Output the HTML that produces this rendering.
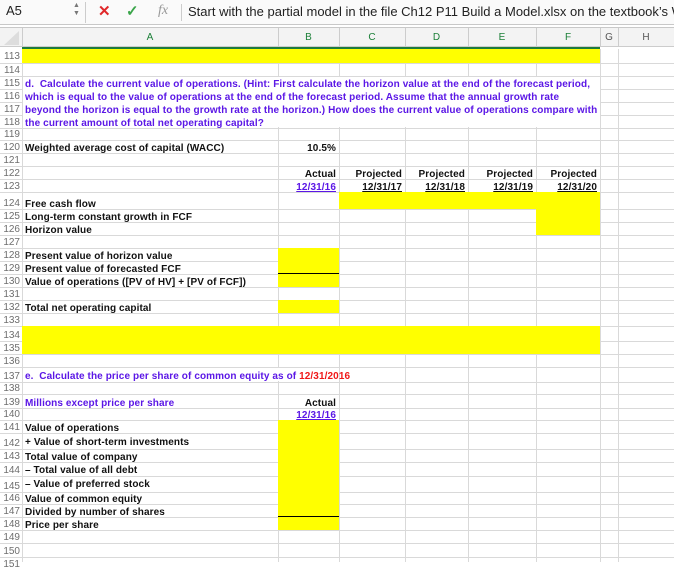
<!DOCTYPE html>
<html><head><meta charset="utf-8"><style>
*{margin:0;padding:0;box-sizing:border-box}
body{width:674px;height:562px;overflow:hidden;background:#fff;position:relative;font-family:"Liberation Sans",Arial,sans-serif}
.a{position:absolute}
.y{position:absolute;background:#ffff00}
.vl{position:absolute;width:1px;background:#d9d9d9}
.hl{position:absolute;height:1px;background:#d9d9d9;left:0;width:674px}
.rn{position:absolute;left:0;width:21px;text-align:right;font-size:10px;color:#6e6e6e;padding-right:1px;background:#fff;margin-top:1px}
.t{position:absolute;font-size:10px;font-weight:bold;color:#111;white-space:nowrap;margin-top:2px;letter-spacing:0.1px}
.p{color:#5b17e6}
.r{text-align:right}
.u{text-decoration:underline}
.ch{position:absolute;top:28px;height:19px;line-height:19px;text-align:center;font-size:10px;color:#1a7f37}
</style></head><body>
<!-- toolbar -->
<div class="a" style="left:0;top:0;width:674px;height:25px;background:#fafafa;border-bottom:1px solid #c8c8c8"></div>
<div class="a" style="left:0;top:25px;width:674px;height:3px;background:#fff;border-bottom:1px solid #c8c8c8"></div>
<div class="a" style="left:6px;top:3px;font-size:13px;color:#222">A5</div>
<div class="a" style="left:73px;top:2px;font-size:7px;color:#777;line-height:8px">▲<br>▼</div>
<div class="a" style="left:85px;top:2px;width:1px;height:21px;background:#ccc"></div>
<div class="a" style="left:98px;top:2px;font-size:15px;color:#e0282a;font-weight:bold">✕</div>
<div class="a" style="left:126px;top:2px;font-size:15px;color:#3aa54a;font-weight:bold">✓</div>
<div class="a" style="left:158px;top:3px;font-size:14px;color:#999;font-style:italic;font-family:'Liberation Serif',serif">fx</div>
<div class="a" style="left:181px;top:4px;width:1px;height:17px;background:#ccc"></div>
<div class="a" style="left:188px;top:4px;font-size:13px;color:#222;white-space:nowrap">Start with the partial model in the file Ch12 P11 Build a Model.xlsx on the textbook’s We</div>
<!-- column header -->
<div class="a" style="left:0;top:28px;width:674px;height:19px;background:#f3f3f3;border-bottom:1px solid #ccc"></div>
<div class="a" style="left:22px;top:47px;width:578px;height:2px;background:#1e7b3c"></div>
<div class="a" style="left:4px;top:31px;width:0;height:0;border-left:15px solid transparent;border-bottom:14px solid #ddd"></div>
<div class="ch" style="left:22px;width:256px">A</div>
<div class="ch" style="left:278px;width:61px">B</div>
<div class="ch" style="left:339px;width:66px">C</div>
<div class="ch" style="left:405px;width:63px">D</div>
<div class="ch" style="left:468px;width:68px">E</div>
<div class="ch" style="left:536px;width:64px">F</div>
<div class="ch" style="left:600px;width:18px;color:#555">G</div>
<div class="ch" style="left:618px;width:56px;color:#555">H</div>
<div class="vl" style="left:22px;top:28px;height:19px;background:#ccc"></div>
<div class="vl" style="left:278px;top:28px;height:19px;background:#ccc"></div>
<div class="vl" style="left:339px;top:28px;height:19px;background:#ccc"></div>
<div class="vl" style="left:405px;top:28px;height:19px;background:#ccc"></div>
<div class="vl" style="left:468px;top:28px;height:19px;background:#ccc"></div>
<div class="vl" style="left:536px;top:28px;height:19px;background:#ccc"></div>
<div class="vl" style="left:600px;top:28px;height:19px;background:#ccc"></div>
<div class="vl" style="left:618px;top:28px;height:19px;background:#ccc"></div>

<!-- horizontal grid -->
<div class="hl" style="top:63px"></div><div class="hl" style="top:76px"></div><div class="hl" style="top:89px"></div><div class="hl" style="top:102px"></div><div class="hl" style="top:115px"></div><div class="hl" style="top:128px"></div><div class="hl" style="top:140px"></div><div class="hl" style="top:153px"></div><div class="hl" style="top:166px"></div><div class="hl" style="top:179px"></div><div class="hl" style="top:192px"></div><div class="hl" style="top:209px"></div><div class="hl" style="top:222px"></div><div class="hl" style="top:235px"></div><div class="hl" style="top:248px"></div><div class="hl" style="top:261px"></div><div class="hl" style="top:274px"></div><div class="hl" style="top:287px"></div><div class="hl" style="top:300px"></div><div class="hl" style="top:313px"></div><div class="hl" style="top:326px"></div><div class="hl" style="top:341px"></div><div class="hl" style="top:354px"></div><div class="hl" style="top:367px"></div><div class="hl" style="top:382px"></div><div class="hl" style="top:394px"></div><div class="hl" style="top:408px"></div><div class="hl" style="top:420px"></div><div class="hl" style="top:433px"></div><div class="hl" style="top:449px"></div><div class="hl" style="top:462px"></div><div class="hl" style="top:476px"></div><div class="hl" style="top:492px"></div><div class="hl" style="top:504px"></div><div class="hl" style="top:517px"></div><div class="hl" style="top:530px"></div><div class="hl" style="top:543px"></div><div class="hl" style="top:557px"></div>
<!-- vertical grid -->
<div class="vl" style="left:22px;top:49px;height:513px"></div>
<div class="vl" style="left:278px;top:49px;height:513px"></div>
<div class="vl" style="left:339px;top:49px;height:513px"></div>
<div class="vl" style="left:405px;top:49px;height:513px"></div>
<div class="vl" style="left:468px;top:49px;height:513px"></div>
<div class="vl" style="left:536px;top:49px;height:513px"></div>
<div class="vl" style="left:600px;top:49px;height:513px"></div>
<div class="vl" style="left:618px;top:49px;height:513px"></div>
<!-- hide grid where text spills -->
<div class="a" style="left:23px;top:77px;width:577px;height:50px;background:#fff"></div>
<div class="a" style="left:23px;top:368px;width:316px;height:13px;background:#fff"></div>
<div class="a" style="left:23px;top:395px;width:254px;height:12px;background:#fff"></div>

<!-- yellow -->
<div class="y" style="left:22px;top:49px;width:578px;height:14px"></div>
<div class="y" style="left:339px;top:192px;width:261px;height:17px"></div>
<div class="y" style="left:536px;top:192px;width:64px;height:43px"></div>
<div class="y" style="left:278px;top:248px;width:61px;height:39px"></div>
<div class="a" style="left:278px;top:273px;width:61px;height:1px;background:#000"></div>
<div class="y" style="left:278px;top:300px;width:61px;height:13px"></div>
<div class="y" style="left:22px;top:326px;width:578px;height:28px"></div>
<div class="y" style="left:278px;top:420px;width:61px;height:110px"></div>
<div class="a" style="left:278px;top:516px;width:61px;height:1px;background:#000"></div>

<!-- row numbers -->
<div class="rn" style="top:50px">113</div><div class="rn" style="top:64px">114</div><div class="rn" style="top:77px">115</div><div class="rn" style="top:90px">116</div><div class="rn" style="top:103px">117</div><div class="rn" style="top:116px">118</div><div class="rn" style="top:128px">119</div><div class="rn" style="top:141px">120</div><div class="rn" style="top:154px">121</div><div class="rn" style="top:167px">122</div><div class="rn" style="top:180px">123</div><div class="rn" style="top:197px">124</div><div class="rn" style="top:210px">125</div><div class="rn" style="top:223px">126</div><div class="rn" style="top:236px">127</div><div class="rn" style="top:249px">128</div><div class="rn" style="top:262px">129</div><div class="rn" style="top:275px">130</div><div class="rn" style="top:288px">131</div><div class="rn" style="top:301px">132</div><div class="rn" style="top:314px">133</div><div class="rn" style="top:329px">134</div><div class="rn" style="top:342px">135</div><div class="rn" style="top:355px">136</div><div class="rn" style="top:370px">137</div><div class="rn" style="top:382px">138</div><div class="rn" style="top:396px">139</div><div class="rn" style="top:408px">140</div><div class="rn" style="top:421px">141</div><div class="rn" style="top:437px">142</div><div class="rn" style="top:450px">143</div><div class="rn" style="top:464px">144</div><div class="rn" style="top:480px">145</div><div class="rn" style="top:492px">146</div><div class="rn" style="top:505px">147</div><div class="rn" style="top:518px">148</div><div class="rn" style="top:531px">149</div><div class="rn" style="top:545px">150</div><div class="rn" style="top:558px">151</div>

<!-- text -->
<div class="t p" style="left:25px;top:77px">d.&nbsp; Calculate the current value of operations. (Hint: First calculate the horizon value at the end of the forecast period,</div>
<div class="t p" style="left:25px;top:90px">which is equal to the value of operations at the end of the forecast period. Assume that the annual growth rate</div>
<div class="t p" style="left:25px;top:103px">beyond the horizon is equal to the growth rate at the horizon.) How does the current value of operations compare with</div>
<div class="t p" style="left:25px;top:116px">the current amount of total net operating capital?</div>
<div class="t" style="left:25px;top:141px">Weighted average cost of capital (WACC)</div>
<div class="t r" style="left:278px;width:58px;top:141px">10.5%</div>
<div class="t r" style="left:278px;width:58px;top:167px">Actual</div>
<div class="t r p u" style="left:278px;width:58px;top:180px">12/31/16</div>
<div class="t r" style="left:339px;width:63px;top:167px">Projected</div>
<div class="t r u" style="left:339px;width:63px;top:180px">12/31/17</div>
<div class="t r" style="left:405px;width:60px;top:167px">Projected</div>
<div class="t r u" style="left:405px;width:60px;top:180px">12/31/18</div>
<div class="t r" style="left:468px;width:65px;top:167px">Projected</div>
<div class="t r u" style="left:468px;width:65px;top:180px">12/31/19</div>
<div class="t r" style="left:536px;width:61px;top:167px">Projected</div>
<div class="t r u" style="left:536px;width:61px;top:180px">12/31/20</div>
<div class="t" style="left:25px;top:197px">Free cash flow</div>
<div class="t" style="left:25px;top:210px">Long-term constant growth in FCF</div>
<div class="t" style="left:25px;top:223px">Horizon value</div>
<div class="t" style="left:25px;top:249px">Present value of horizon value</div>
<div class="t" style="left:25px;top:262px">Present value of forecasted FCF</div>
<div class="t" style="left:25px;top:275px">Value of operations ([PV of HV] + [PV of FCF])</div>
<div class="t" style="left:25px;top:301px">Total net operating capital</div>
<div class="t p" style="left:25px;top:369px">e.&nbsp; Calculate the price per share of common equity as of <span style="color:#f01818">12/31/2016</span></div>
<div class="t p" style="left:25px;top:396px">Millions except price per share</div>
<div class="t r" style="left:278px;width:58px;top:396px">Actual</div>
<div class="t r p u" style="left:278px;width:58px;top:408px">12/31/16</div>
<div class="t" style="left:25px;top:421px">Value of operations</div>
<div class="t" style="left:25px;top:435px">+ Value of short-term investments</div>
<div class="t" style="left:25px;top:450px">Total value of company</div>
<div class="t" style="left:25px;top:463px">– Total value of all debt</div>
<div class="t" style="left:25px;top:477px">– Value of preferred stock</div>
<div class="t" style="left:25px;top:492px">Value of common equity</div>
<div class="t" style="left:25px;top:505px">Divided by number of shares</div>
<div class="t" style="left:25px;top:518px">Price per share</div>
</body></html>
